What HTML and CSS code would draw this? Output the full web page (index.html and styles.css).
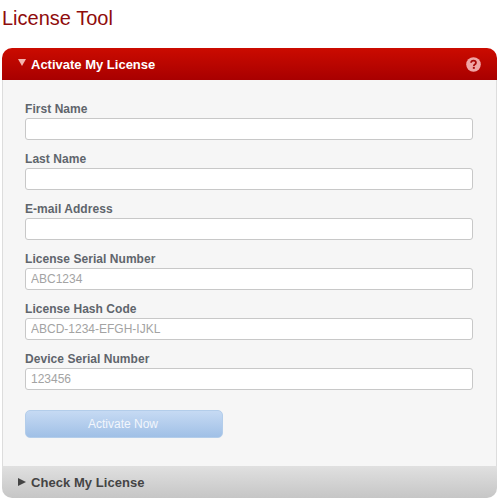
FILE: index.html
```html
<!DOCTYPE html>
<html lang="en">
<head>
    <meta charset="UTF-8">
    <title>License Tool</title>
    <link rel="stylesheet" href="styles.css">
</head>
<body>
    <h1>License Tool</h1>
    <div class="panel">
        <div class="panel-head">
            <span class="arrow-down"></span>
            <span class="panel-title">Activate My License</span>
            <svg class="help-icon" width="15" height="15" viewBox="0 0 16 16">
                <circle cx="8" cy="8" r="7.8" fill="#f0a5a5"/>
                <path d="M5.4 6.2C5.5 4.6 6.6 3.8 8 3.8c1.5 0 2.6.9 2.6 2.2 0 1-.6 1.5-1.3 2-.6.4-.9.7-.9 1.5" fill="none" stroke="#a80808" stroke-width="1.9"/>
                <rect x="7.3" y="10.5" width="2.1" height="2.1" fill="#a80808"/>
            </svg>
        </div>
        <form class="panel-body">
            <div class="field">
                <label for="first-name">First Name</label>
                <input type="text" id="first-name">
            </div>
            <div class="field">
                <label for="last-name">Last Name</label>
                <input type="text" id="last-name">
            </div>
            <div class="field">
                <label for="email">E-mail Address</label>
                <input type="text" id="email">
            </div>
            <div class="field">
                <label for="serial">License Serial Number</label>
                <input type="text" id="serial" placeholder="ABC1234">
            </div>
            <div class="field">
                <label for="hash">License Hash Code</label>
                <input type="text" id="hash" placeholder="ABCD-1234-EFGH-IJKL">
            </div>
            <div class="field">
                <label for="device">Device Serial Number</label>
                <input type="text" id="device" placeholder="123456">
            </div>
            <button class="btn" type="button" disabled>Activate Now</button>
        </form>
        <div class="panel-foot">
            <span class="arrow-right"></span>
            <span class="foot-title">Check My License</span>
        </div>
    </div>
</body>
</html>
```

FILE: styles.css
```css
body {
    margin: 0;
    padding: 0 3px 0 2px;
    background-color: #fff;
    font-family: "Liberation Sans", Arial, sans-serif;
}
h1 {
    margin: 0;
    height: 48px;
    padding-top: 6px;
    box-sizing: border-box;
    font-size: 20px;
    line-height: 24px;
    font-weight: normal;
    color: #8f0c0c;
}
.panel-head {
    display: flex;
    align-items: center;
    height: 32px;
    padding: 0 16px;
    border-radius: 10px 10px 0 0;
    background: linear-gradient(#cb0b00, #a80000);
}
.arrow-down {
    width: 0;
    height: 0;
    margin-right: 5px;
    margin-top: -3px;
    border-left: 4px solid transparent;
    border-right: 4px solid transparent;
    border-top: 7px solid #f3b4ae;
}
.panel-title {
    flex: 1;
    font-size: 13px;
    font-weight: bold;
    color: #fff;
}
.help-icon {
    margin-right: 0;
}
.panel-body {
    height: 386px;
    box-sizing: border-box;
    padding: 20px 23px 0 22px;
    background-color: #f6f6f6;
    border-left: 1px solid #ddd;
    border-right: 1px solid #ddd;
}
.field {
    height: 50px;
}
.field label {
    display: block;
    height: 18px;
    font-size: 12px;
    line-height: 18px;
    font-weight: bold;
    letter-spacing: 0.05px;
    color: #5f656c;
}
.field input {
    display: block;
    width: 100%;
    height: 22px;
    box-sizing: border-box;
    padding: 0 5px;
    border: 1px solid #c8c8c8;
    border-radius: 3px;
    background-color: #fff;
    font-family: inherit;
    font-size: 12px;
}
.field input::placeholder {
    color: #a3a3a3;
    opacity: 1;
}
.btn {
    display: block;
    width: 198px;
    height: 28px;
    margin-top: 10px;
    padding: 0 2px 0 0;
    border: 1px solid #b3cdea;
    border-radius: 5px;
    background: linear-gradient(#c6daf3, #a0c0e6);
    font-family: inherit;
    font-size: 12px;
    color: #f2f6fc;
}
.panel-foot {
    display: flex;
    align-items: center;
    height: 32px;
    padding: 0 16px;
    border-radius: 0 0 10px 10px;
    background: linear-gradient(#e0e0e0, #c6c6c6);
}
.arrow-right {
    width: 0;
    height: 0;
    margin-right: 5px;
    border-top: 4px solid transparent;
    border-bottom: 4px solid transparent;
    border-left: 8px solid #444;
}
.foot-title {
    font-size: 13px;
    font-weight: bold;
    letter-spacing: 0.05px;
    color: #444;
}
```
